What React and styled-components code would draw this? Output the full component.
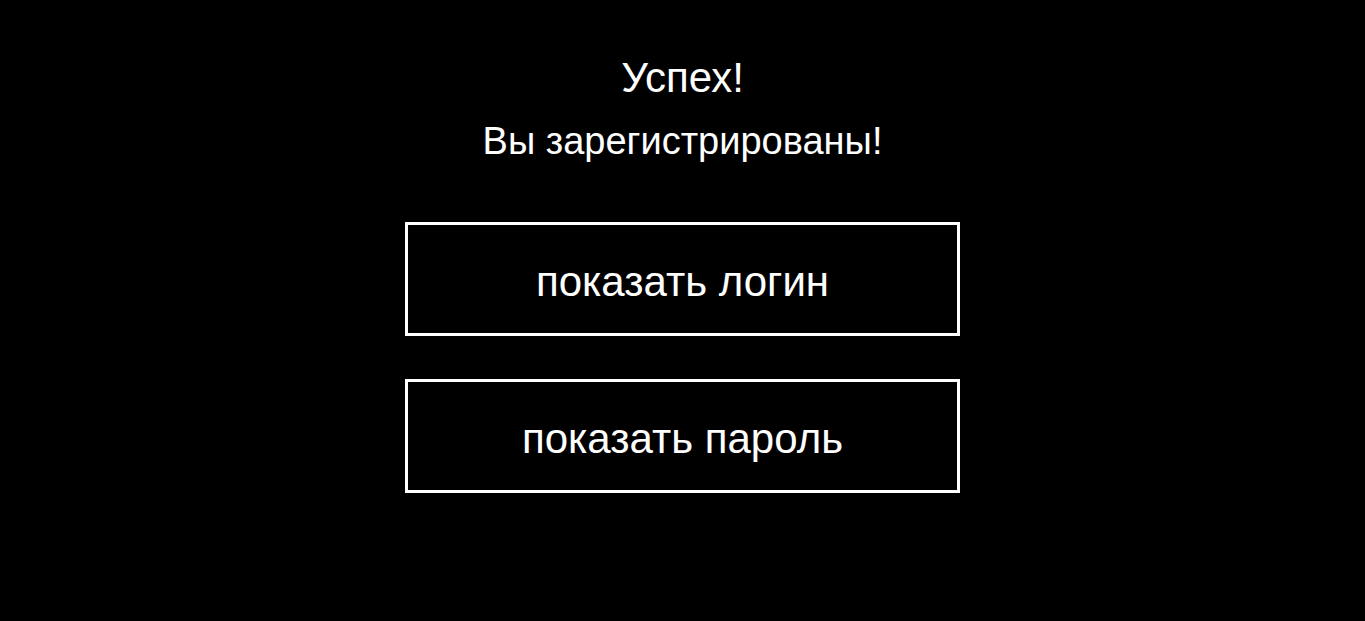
import React from 'react';
import styled, { createGlobalStyle } from 'styled-components';

const GlobalStyle = createGlobalStyle`
  html, body {
    margin: 0;
    padding: 0;
    background: #000;
    min-height: 100%;
  }
  body {
    font-family: "Liberation Sans", Arial, sans-serif;
    color: #fff;
  }
`;

const Page = styled.div`
  display: flex;
  flex-direction: column;
  align-items: center;
  padding-top: 55px;
  min-height: 100vh;
  box-sizing: border-box;
  background: #000;
`;

const Title = styled.h1`
  margin: 0;
  font-size: 42px;
  line-height: 46px;
  font-weight: normal;
  color: #fff;
`;

const Subtitle = styled.p`
  margin: 20px 0 0;
  font-size: 38px;
  line-height: 40px;
  color: #fff;
`;

const Actions = styled.div`
  display: flex;
  flex-direction: column;
  gap: 43px;
  margin-top: 61px;
`;

const ActionButton = styled.button`
  width: 555px;
  height: 114px;
  box-sizing: border-box;
  border: 3px solid #fff;
  background: #000;
  color: #fff;
  font-family: "Liberation Sans", Arial, sans-serif;
  font-size: 42px;
  cursor: pointer;
  padding: 5px 0 0;
`;

export default function App() {
  return (
    <>
      <GlobalStyle />
      <Page>
        <Title>Успех!</Title>
        <Subtitle>Вы зарегистрированы!</Subtitle>
        <Actions>
          <ActionButton>показать логин</ActionButton>
          <ActionButton>показать пароль</ActionButton>
        </Actions>
      </Page>
    </>
  );
}
